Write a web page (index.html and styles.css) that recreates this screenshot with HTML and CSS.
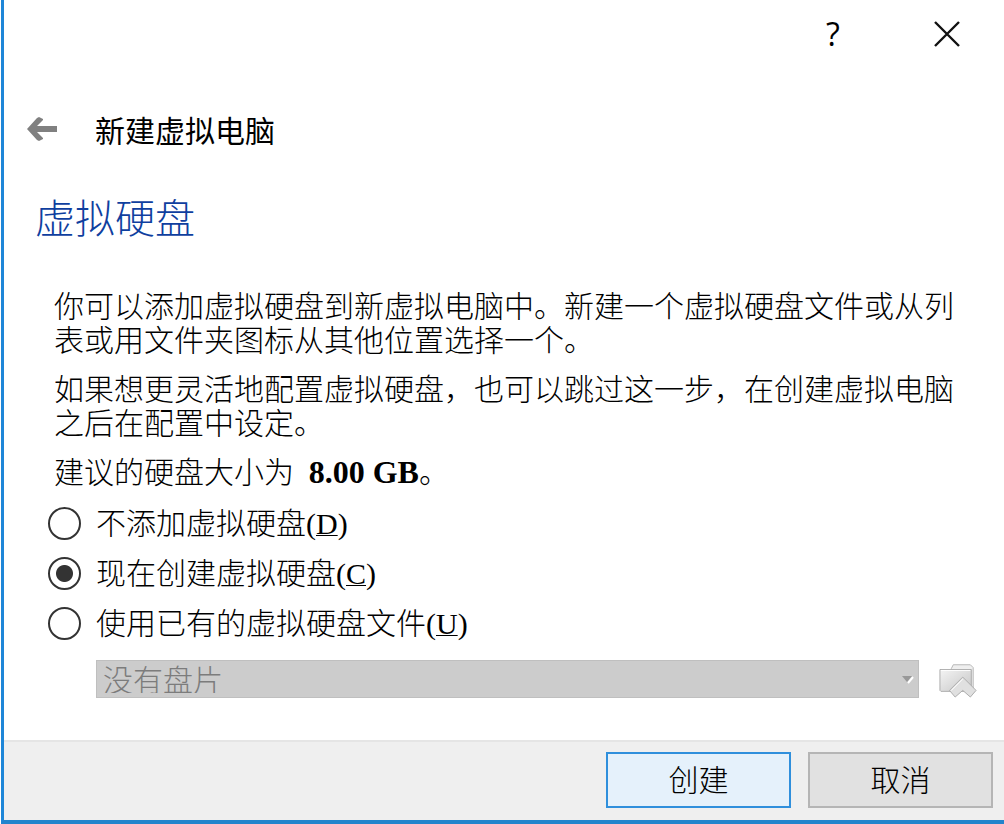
FILE: index.html
```
<!DOCTYPE html>
<html lang="zh-CN">
<head>
  <meta charset="UTF-8" />
  <meta name="viewport" content="width=device-width, initial-scale=1" />
  <title>新建虚拟电脑</title>
  <link rel="stylesheet" href="styles.css">
</head>
<body>

<form class="wizard">
  <div class="titlebar">
    <button type="button" class="title-btn help">?</button>
    <button type="button" class="title-btn close" aria-label="关闭">
      <svg width="28" height="28" viewBox="0 0 28 28"><path d="M2 2 L26 26 M26 2 L2 26" stroke="#111" stroke-width="2.4" fill="none"/></svg>
    </button>
  </div>

  <header class="wizard-header">
    <button type="button" class="back" aria-label="返回">
      <svg width="30" height="24" viewBox="0 0 30 24"><path d="M0 12 L10 1 L12 0 L16 2 L16 3 L10 9 L30 9 L30 15 L10 15 L16 21 L16 22 L12 24 L10 23 Z" fill="#808080"/></svg>
    </button>
    <h1>新建虚拟电脑</h1>
  </header>

  <main>
    <h2>虚拟硬盘</h2>
    <div class="description">
      <p>你可以添加虚拟硬盘到新虚拟电脑中。新建一个虚拟硬盘文件或从列表或用文件夹图标从其他位置选择一个。</p>
      <p>如果想更灵活地配置虚拟硬盘，也可以跳过这一步，在创建虚拟电脑之后在配置中设定。</p>
      <p>建议的硬盘大小为 <b>8.00 GB</b>。</p>
    </div>

    <div class="options">
      <label><input type="radio" name="disk" value="none" /><span>不添加虚拟硬盘<span class="key">(<u>D</u>)</span></span></label>
      <label><input type="radio" name="disk" value="create" checked /><span>现在创建虚拟硬盘<span class="key">(<u>C</u>)</span></span></label>
      <label><input type="radio" name="disk" value="existing" /><span>使用已有的虚拟硬盘文件<span class="key">(<u>U</u>)</span></span></label>
    </div>

    <div class="file-row">
      <div class="select-wrap">
        <select aria-label="虚拟硬盘文件" disabled>
          <option>没有盘片</option>
        </select>
        <svg class="arrow" width="12" height="8" viewBox="0 0 12 8"><path d="M6 7 L11 1" stroke="#fff" stroke-width="2"/><path d="M0 0 H10 L5 6 Z" fill="#989898"/></svg>
      </div>
      <button type="button" class="folder" aria-label="选择虚拟硬盘文件" disabled>
        <svg width="40" height="38" viewBox="0 -4 40 40">
          <defs>
            <linearGradient id="paper" x1="0" y1="0" x2="1" y2="1">
              <stop offset="0" stop-color="#f4f4f4"/>
              <stop offset="1" stop-color="#c6c6c6"/>
            </linearGradient>
          </defs>
          <path d="M13 5 L15 1 H33 L36 4 V27 H13 Z" fill="#efefef" stroke="#b4b4b4"/>
          <path d="M1 6 H34 V29 H2 L1 28 Z" fill="url(#paper)" stroke="#aaa"/>
          <path d="M2 7 H33" stroke="#fff"/>
          <path d="M25 14 L39 28 L33 35 L25 28 L17 35 L11 28 Z" fill="#e0e0e0" stroke="#aaa" stroke-linejoin="round"/>
          <path d="M25 16 L13 28" stroke="#fff"/>
        </svg>
      </button>
    </div>
  </main>

  <footer>
    <button type="submit" class="btn primary">创建</button>
    <button type="button" class="btn">取消</button>
  </footer>
</form>

</body>
</html>
```
FILE: styles.css
```
* {
  box-sizing: border-box;
}
body {
  margin: 0;
  background: #fff;
  color: #000;
  font-family: "Noto Sans CJK SC", sans-serif;
  font-size: 30px;
  font-weight: 300;
  line-height: 34px;
}
button,
select {
  font: inherit;
  color: inherit;
  padding: 0;
  border: none;
  background: none;
}
svg {
  display: block;
}
.wizard {
  display: flex;
  flex-direction: column;
  min-height: 100vh;
  margin-left: 1px;
  border-left: 3px solid #1e86d8;
  border-bottom: 4px solid #2384cc;
}

/* Title bar */
.titlebar {
  display: flex;
  justify-content: flex-end;
  height: 67px;
}
.title-btn {
  display: flex;
  align-items: center;
  justify-content: center;
  width: 114px;
}
.help {
  font-family: "Open Sans", sans-serif;
  font-size: 32px;
  font-weight: 500;
}
.wizard-header {
  display: flex;
  align-items: center;
  gap: 38px;
  height: 124px;
  padding-left: 23px;
}
h1 {
  margin: 0;
  font-size: 30px;
  font-weight: 400;
}

/* Page content */
main {
  flex: 1;
  padding: 0 26px 40px 31px;
}
h2 {
  margin: 0;
  color: #0f3f9f;
  font-size: 40px;
  font-weight: 300;
  line-height: 50px;
}
.description {
  display: flex;
  flex-direction: column;
  gap: 15px;
  padding: 46px 20px 0 19px;
}
p {
  margin: 0;
}
b {
  margin-left: 8px;
  font-family: "Liberation Serif", serif;
  font-size: 32px;
  font-weight: 700;
  line-height: 0;
}
.options {
  display: flex;
  flex-direction: column;
  align-items: flex-start;
  gap: 16px;
  padding: 19px 0 0 13px;
}
.options label {
  display: flex;
  align-items: center;
  height: 34px;
}
.options label > span {
  padding-bottom: 4px;
}
input[type="radio"] {
  appearance: none;
  width: 33px;
  height: 33px;
  margin: 0 15px 0 0;
  border: 2px solid #333;
  border-radius: 50%;
}
input[type="radio"]:checked {
  background: radial-gradient(circle, #333 8px, #fff 9px);
}
.key {
  font-family: "Liberation Serif", serif;
  line-height: 0;
}
u {
  text-decoration-thickness: 1px;
}
.file-row {
  display: flex;
  align-items: center;
  gap: 19px;
  padding: 20px 0 0 61px;
}
.select-wrap {
  position: relative;
  flex: 1;
}
select {
  appearance: none;
  display: block;
  width: 100%;
  height: 38px;
  padding: 0 0 4px 6px;
  border: 1px solid #bfbfbf;
  border-radius: 0;
  background: #ccc;
  color: #7c7c7c;
  opacity: 1;
}
.arrow {
  position: absolute;
  right: 5px;
  top: 16px;
}

/* Buttons */
footer {
  display: flex;
  justify-content: flex-end;
  gap: 17px;
  padding: 10px 11px 12px;
  border-top: 2px solid #e5e5e5;
  background: #efefef;
}
.btn {
  width: 185px;
  height: 56px;
  padding-bottom: 4px;
  border: 2px solid #b5b5b5;
  background: #e1e1e1;
}
.btn.primary {
  border-color: #2f8fdc;
  background: #e5f1fb;
}
```
